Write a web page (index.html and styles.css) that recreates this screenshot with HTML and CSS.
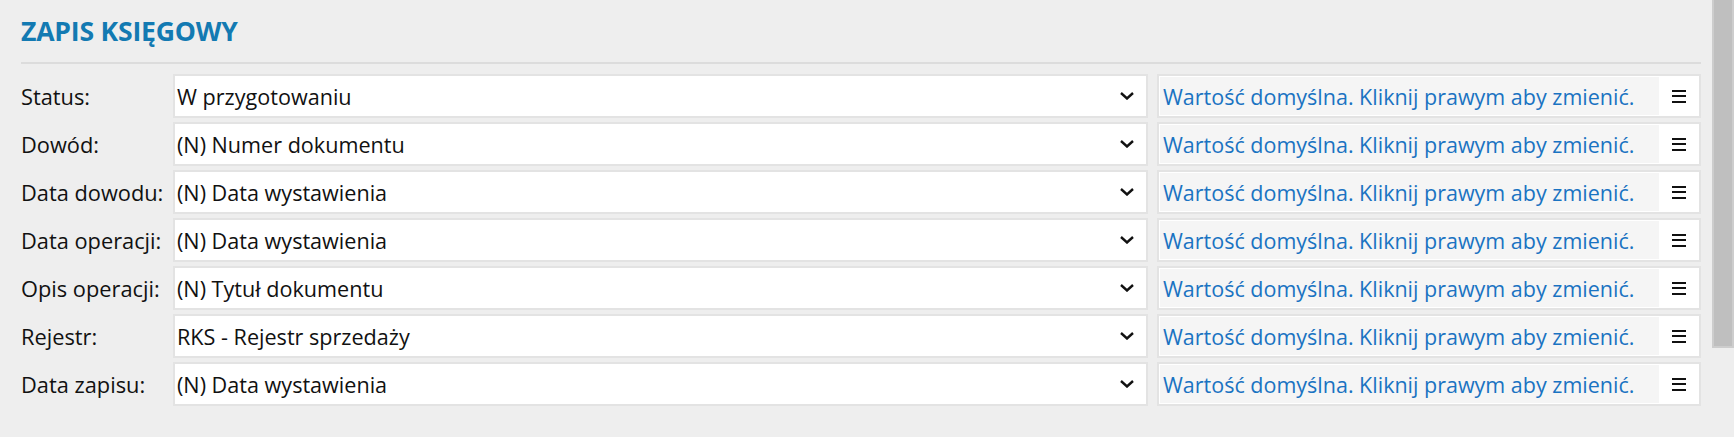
FILE: index.html
```html
<!DOCTYPE html>
<html lang="pl">
<head>
<meta charset="utf-8">
<title>Zapis księgowy</title>
<link rel="stylesheet" href="styles.css">
</head>
<body>
<div class="page">
  <main class="panel">
    <header class="header">
      <h2 class="title">ZAPIS KSIĘGOWY</h2>
    </header>
    <div class="rows">
      <div class="row">
        <span class="label">Status:</span>
        <div class="select"><span class="value">W przygotowaniu</span><svg class="chev" width="14" height="8" viewBox="0 0 14 8"><path d="M1 1 L7 6.5 L13 1" fill="none" stroke="#111" stroke-width="2.4"/></svg></div>
        <div class="info"><span class="hint">Wartość domyślna. Kliknij prawym aby zmienić.</span><span class="menu"><svg width="14" height="13" viewBox="0 0 14 13"><rect x="0" y="0" width="14" height="2" fill="#111"/><rect x="0" y="5" width="14" height="2" fill="#111"/><rect x="0" y="11" width="14" height="2" fill="#111"/></svg></span></div>
      </div>
      <div class="row">
        <span class="label">Dowód:</span>
        <div class="select"><span class="value">(N) Numer dokumentu</span><svg class="chev" width="14" height="8" viewBox="0 0 14 8"><path d="M1 1 L7 6.5 L13 1" fill="none" stroke="#111" stroke-width="2.4"/></svg></div>
        <div class="info"><span class="hint">Wartość domyślna. Kliknij prawym aby zmienić.</span><span class="menu"><svg width="14" height="13" viewBox="0 0 14 13"><rect x="0" y="0" width="14" height="2" fill="#111"/><rect x="0" y="5" width="14" height="2" fill="#111"/><rect x="0" y="11" width="14" height="2" fill="#111"/></svg></span></div>
      </div>
      <div class="row">
        <span class="label">Data dowodu:</span>
        <div class="select"><span class="value">(N) Data wystawienia</span><svg class="chev" width="14" height="8" viewBox="0 0 14 8"><path d="M1 1 L7 6.5 L13 1" fill="none" stroke="#111" stroke-width="2.4"/></svg></div>
        <div class="info"><span class="hint">Wartość domyślna. Kliknij prawym aby zmienić.</span><span class="menu"><svg width="14" height="13" viewBox="0 0 14 13"><rect x="0" y="0" width="14" height="2" fill="#111"/><rect x="0" y="5" width="14" height="2" fill="#111"/><rect x="0" y="11" width="14" height="2" fill="#111"/></svg></span></div>
      </div>
      <div class="row">
        <span class="label">Data operacji:</span>
        <div class="select"><span class="value">(N) Data wystawienia</span><svg class="chev" width="14" height="8" viewBox="0 0 14 8"><path d="M1 1 L7 6.5 L13 1" fill="none" stroke="#111" stroke-width="2.4"/></svg></div>
        <div class="info"><span class="hint">Wartość domyślna. Kliknij prawym aby zmienić.</span><span class="menu"><svg width="14" height="13" viewBox="0 0 14 13"><rect x="0" y="0" width="14" height="2" fill="#111"/><rect x="0" y="5" width="14" height="2" fill="#111"/><rect x="0" y="11" width="14" height="2" fill="#111"/></svg></span></div>
      </div>
      <div class="row">
        <span class="label">Opis operacji:</span>
        <div class="select"><span class="value">(N) Tytuł dokumentu</span><svg class="chev" width="14" height="8" viewBox="0 0 14 8"><path d="M1 1 L7 6.5 L13 1" fill="none" stroke="#111" stroke-width="2.4"/></svg></div>
        <div class="info"><span class="hint">Wartość domyślna. Kliknij prawym aby zmienić.</span><span class="menu"><svg width="14" height="13" viewBox="0 0 14 13"><rect x="0" y="0" width="14" height="2" fill="#111"/><rect x="0" y="5" width="14" height="2" fill="#111"/><rect x="0" y="11" width="14" height="2" fill="#111"/></svg></span></div>
      </div>
      <div class="row">
        <span class="label">Rejestr:</span>
        <div class="select"><span class="value">RKS - Rejestr sprzedaży</span><svg class="chev" width="14" height="8" viewBox="0 0 14 8"><path d="M1 1 L7 6.5 L13 1" fill="none" stroke="#111" stroke-width="2.4"/></svg></div>
        <div class="info"><span class="hint">Wartość domyślna. Kliknij prawym aby zmienić.</span><span class="menu"><svg width="14" height="13" viewBox="0 0 14 13"><rect x="0" y="0" width="14" height="2" fill="#111"/><rect x="0" y="5" width="14" height="2" fill="#111"/><rect x="0" y="11" width="14" height="2" fill="#111"/></svg></span></div>
      </div>
      <div class="row">
        <span class="label">Data zapisu:</span>
        <div class="select"><span class="value">(N) Data wystawienia</span><svg class="chev" width="14" height="8" viewBox="0 0 14 8"><path d="M1 1 L7 6.5 L13 1" fill="none" stroke="#111" stroke-width="2.4"/></svg></div>
        <div class="info"><span class="hint">Wartość domyślna. Kliknij prawym aby zmienić.</span><span class="menu"><svg width="14" height="13" viewBox="0 0 14 13"><rect x="0" y="0" width="14" height="2" fill="#111"/><rect x="0" y="5" width="14" height="2" fill="#111"/><rect x="0" y="11" width="14" height="2" fill="#111"/></svg></span></div>
      </div>
    </div>
  </main>
  <div class="scrollbar"><div class="thumb"></div></div>
</div>
</body>
</html>
```

FILE: styles.css
```css
html, body {
  margin: 0;
  padding: 0;
  background: #eeeeee;
}

body {
  font-family: "Open Sans", "Noto Sans", sans-serif;
  color: #111111;
}

.page {
  display: flex;
  height: 437px;
  overflow: hidden;
}

.panel {
  flex: 1;
  padding: 0 11px 0 21px;
  min-width: 0;
}

.header {
  padding: 14px 0 14px 0;
  border-bottom: 2px solid #dcdcdc;
  margin-bottom: 10px;
}

.title {
  margin: 0;
  font-size: 26.6px;
  line-height: 34px;
  font-weight: 700;
  color: #137ab2;
  letter-spacing: -0.2px;
}

.rows {
  display: flex;
  flex-direction: column;
  gap: 4px;
}

.row {
  display: grid;
  grid-template-columns: 152px 1fr 553px;
  height: 44px;
}

.label {
  display: flex;
  align-items: center;
  font-size: 21.8px;
  color: #111;
  white-space: nowrap;
}

.select {
  display: flex;
  align-items: center;
  justify-content: space-between;
  background: #ffffff;
  border: 2px solid #e3e3e3;
  padding: 0 12px 0 2px;
  font-size: 21.6px;
}

.chev {
  display: block;
}

.info {
  display: flex;
  margin-left: 9px;
  border: 2px solid #e3e3e3;
  background: #ffffff;
  padding: 1px 0 1px 1px;
}

.hint {
  flex: 1;
  display: flex;
  align-items: center;
  background: #f5f5f5;
  color: #1a73c2;
  font-size: 21.5px;
  padding-left: 3px;
  white-space: nowrap;
}

.menu {
  width: 40px;
  display: flex;
  align-items: center;
  justify-content: center;
  background: #ffffff;
}

.menu svg {
  display: block;
}

.scrollbar {
  width: 22px;
  flex: none;
  background: #eeeeee;
}

.thumb {
  height: 348px;
  box-sizing: border-box;
  background: #bfbfbf;
  border: 2px solid #cdcdcd;
  border-top: none;
}
```
